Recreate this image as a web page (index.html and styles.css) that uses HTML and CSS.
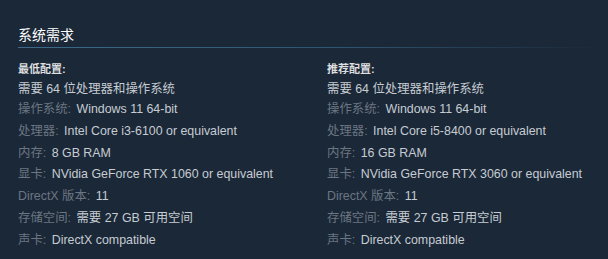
FILE: index.html
```html
<!DOCTYPE html>
<html lang="zh-CN">
<head>
<meta charset="utf-8">
<title>系统需求</title>
<link rel="stylesheet" href="styles.css">
</head>
<body>
<section class="sysreq">
  <h2 class="title">系统需求</h2>
  <div class="cols">
    <div class="col">
      <div class="heading">最低配置:</div>
      <ul class="list">
        <li class="first">需要 64 位处理器和操作系统</li>
        <li><span class="lbl">操作系统:</span> Windows 11 64-bit</li>
        <li><span class="lbl">处理器:</span> Intel Core i3-6100 or equivalent</li>
        <li><span class="lbl">内存:</span> 8 GB RAM</li>
        <li><span class="lbl">显卡:</span> NVidia GeForce RTX 1060 or equivalent</li>
        <li><span class="lbl">DirectX 版本:</span> 11</li>
        <li><span class="lbl">存储空间:</span> 需要 27 GB 可用空间</li>
        <li><span class="lbl">声卡:</span> DirectX compatible</li>
      </ul>
    </div>
    <div class="col">
      <div class="heading">推荐配置:</div>
      <ul class="list">
        <li class="first">需要 64 位处理器和操作系统</li>
        <li><span class="lbl">操作系统:</span> Windows 11 64-bit</li>
        <li><span class="lbl">处理器:</span> Intel Core i5-8400 or equivalent</li>
        <li><span class="lbl">内存:</span> 16 GB RAM</li>
        <li><span class="lbl">显卡:</span> NVidia GeForce RTX 3060 or equivalent</li>
        <li><span class="lbl">DirectX 版本:</span> 11</li>
        <li><span class="lbl">存储空间:</span> 需要 27 GB 可用空间</li>
        <li><span class="lbl">声卡:</span> DirectX compatible</li>
      </ul>
    </div>
  </div>
</section>
</body>
</html>
```
FILE: styles.css
```css
html, body {
  margin: 0;
  padding: 0;
  background: #1b2838;
  height: 100%;
}
body {
  font-family: "Liberation Sans", Arial, "Noto Sans CJK SC", sans-serif;
  overflow: hidden;
}
.sysreq {
  padding: 25px 8px 0 18px;
}
.title {
  margin: 0;
  font-size: 14px;
  font-weight: normal;
  line-height: 20px;
  color: #ffffff;
  padding-bottom: 2px;
  border-bottom: 1px solid transparent;
  border-image: linear-gradient(to right, #3c6a8a 0%, #2f5670 55%, rgba(27,40,56,0) 100%) 1;
}
.cols {
  display: grid;
  grid-template-columns: 309px 1fr;
  padding-top: 14px;
}
.heading {
  font-size: 11px;
  font-weight: bold;
  line-height: 14px;
  color: #dcdedf;
}
.list {
  list-style: none;
  margin: 3px 0 0;
  padding: 0;
  font-size: 12.4px;
  color: #c6ccd2;
}
.list li {
  line-height: 21.8px;
  white-space: nowrap;
}
.list li.first {
  line-height: 20px;
}
.lbl {
  color: #6b7682;
  margin-right: 2px;
}
```
